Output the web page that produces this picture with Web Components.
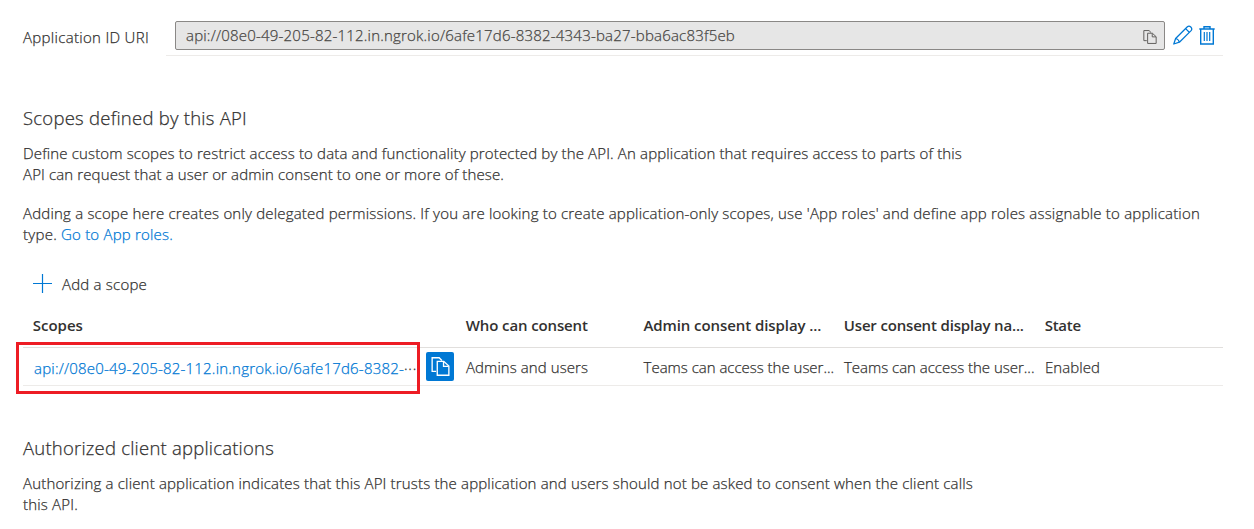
<!DOCTYPE html>
<html lang="en">
<head>
<meta charset="utf-8">
<title>Expose an API</title>
<style>
html,body{margin:0;background:#fff}
body{font:300 15px/21px "Open Sans","Noto Sans",sans-serif;color:#323130;-webkit-text-stroke:.25px;overflow:hidden}
</style>
</head>
<body>
<api-page></api-page>
<script>
const define=(name,html,init)=>{
  const t=document.createElement('template');t.innerHTML=html;
  customElements.define(name,class extends HTMLElement{
    constructor(){super();this.attachShadow({mode:'open'}).append(t.content.cloneNode(true));}
    connectedCallback(){if(init)init.call(this);}
  });
};

/* A single line of text whose tracking is tuned to the given measure. */
define('fit-line',`<style>:host{display:block;white-space:pre;width:max-content}span{display:inline-block}</style><span><slot></slot></span>`,function(){
  const s=this.shadowRoot.querySelector('span'),w=+this.getAttribute('measure');
  const n=[...this.textContent].length;
  s.style.letterSpacing=(w-s.getBoundingClientRect().width)/n+'px';
});

define('copy-icon',`<style>:host{display:block;width:20px;height:20px}svg{display:block;width:100%;height:100%}</style>
<svg viewBox="0 0 20 20" fill="none" stroke="currentColor" stroke-width="1.4"><path d="M5.4 15.2H1.2V.8H8.6L11.5 3.6"/><path d="M6.6 4.6H13.4L18.8 9.6V19.2H6.6Z"/><path d="M13.2 4.8V9.8H18.6"/></svg>`);

define('edit-icon',`<style>:host{display:block;width:20px;height:20px}svg{display:block}</style>
<svg width="20" height="20" viewBox="0 0 20 20" fill="none" stroke="currentColor" stroke-width="1.25" stroke-linejoin="round"><path d="M.8 19 2.6 13.5 14.4 1.8Q16 .3 17.8 2T18.1 5.6L6.4 17.2Z"/><path d="M12.6 3.6 16.3 7.3M2.6 13.5Q5.6 14.2 6.4 17.2"/></svg>`);

define('delete-icon',`<style>:host{display:block;width:16px;height:20px}svg{display:block}</style>
<svg width="16" height="20" viewBox="0 0 16 20" fill="none" stroke="currentColor" stroke-width="1.4"><path d="M.3 4H15.7M5 4V1.7H11V4M1.7 4V19H14.3V4"/><path d="M5.3 7V16M8 7V16M10.7 7V16" stroke-width="1.2"/></svg>`);

define('uri-field',`<style>
:host{display:flex;height:56px}
.label{width:143px;padding-top:27px;box-sizing:border-box}
.control{width:1057px;box-sizing:border-box;border-bottom:1px solid #edebe9;padding:21px 0 0 9px;display:flex}
.box{width:990px;height:29px;box-sizing:border-box;border:1px solid #8a8886;border-radius:2px;background:#e6e6e6;display:flex;justify-content:space-between;padding:3px 7px 0 10px;color:#484644}
copy-icon{width:14px;height:16px;margin-top:4px;color:#605e5c}
edit-icon{margin:4px 0 0 8px;color:#0078d4}
delete-icon{margin:4px 0 0 6px;color:#0078d4}
</style>
<div class="label"><slot name="label"></slot></div>
<div class="control"><div class="box"><slot></slot><copy-icon></copy-icon></div><edit-icon></edit-icon><delete-icon></delete-icon></div>`);

define('section-title',`<style>:host{display:block;font-size:18.5px;line-height:24px}</style><slot></slot>`);
define('app-link',`<style>:host{display:block;color:#0078d4}</style><slot></slot>`);
define('text-row',`<style>:host{display:flex;gap:4px}</style><slot></slot>`);

define('add-button',`<style>:host{display:flex;gap:10px;padding-left:10px}svg{display:block;color:#0078d4}</style>
<svg width="19" height="19" viewBox="0 0 19 19" stroke="currentColor" stroke-width="1.2"><path d="M9.5 0V19M0 9.5H19"/></svg><slot></slot>`);

define('scope-row',`<style>
:host{display:grid;grid-template-columns:433px 177.6px 200.4px 201px 1fr;padding-left:10px;border-bottom:1px solid #edebe9;box-sizing:border-box;align-items:start}
:host([header]){font-weight:600;-webkit-text-stroke:0;height:38px;padding:5px 0 0 9.8px;border-color:#e1dfdd}
:host(:not([header])){height:38px;padding-top:9px}
</style><slot></slot>`);

define('scope-name',`<style>
:host{display:flex;position:relative;padding:1px 0 0 1px}
.more{color:#323130;margin-top:-4px}
.frame{position:absolute;left:-17px;top:-15px;width:404px;height:52px;box-sizing:border-box;border:3px solid #ed1c24}
.copy{position:absolute;left:393px;top:-5px;width:28px;height:29px;border-radius:2px;background:#0078d4;color:#fff;display:flex;justify-content:center;align-items:center}
copy-icon{width:19px;height:21px}
</style><app-link><slot></slot></app-link><span class="more"><slot name="more"></slot></span><div class="frame"></div><div class="copy"><copy-icon></copy-icon></div>`);

define('api-page',`<style>
:host{display:block;width:1200px;padding-left:23px}
.s1{margin-top:50px}.p{margin-top:13px}.p2{margin-top:18px}.add{margin-top:29px}.table{margin-top:15px}.s2{margin-top:50px}
</style>
<uri-field><fit-line slot="label" measure="126">Application ID URI</fit-line><fit-line measure="549">api://08e0-49-205-82-112.in.ngrok.io/6afe17d6-8382-4343-ba27-bba6ac83f5eb</fit-line></uri-field>
<section-title class="s1"><fit-line measure="224">Scopes defined by this API</fit-line></section-title>
<div class="p"><fit-line measure="939">Define custom scopes to restrict access to data and functionality protected by the API. An application that requires access to parts of this</fit-line>
<fit-line measure="481">API can request that a user or admin consent to one or more of these.</fit-line></div>
<div class="p2"><fit-line measure="1177">Adding a scope here creates only delegated permissions. If you are looking to create application-only scopes, use 'App roles' and define app roles assignable to application</fit-line>
<text-row><fit-line measure="34">type.</fit-line><app-link><fit-line measure="112">Go to App roles.</fit-line></app-link></text-row></div>
<add-button class="add"><fit-line measure="85">Add a scope</fit-line></add-button>
<div class="table">
<scope-row header><fit-line measure="50">Scopes</fit-line><fit-line measure="122">Who can consent</fit-line><fit-line measure="178">Admin consent display ...</fit-line><fit-line measure="180">User consent display na...</fit-line><fit-line measure="36">State</fit-line></scope-row>
<scope-row><scope-name><fit-line measure="370">api://08e0-49-205-82-112.in.ngrok.io/6afe17d6-8382-</fit-line><fit-line slot="more" measure="13">...</fit-line></scope-name><fit-line measure="122">Admins and users</fit-line><fit-line measure="190.5">Teams can access the user...</fit-line><fit-line measure="190.5">Teams can access the user...</fit-line><fit-line measure="55">Enabled</fit-line></scope-row>
</div>
<section-title class="s2"><fit-line measure="251">Authorized client applications</fit-line></section-title>
<div class="p"><fit-line measure="950">Authorizing a client application indicates that this API trusts the application and users should not be asked to consent when the client calls</fit-line>
<fit-line measure="55">this API.</fit-line></div>`);
</script>
</body>
</html>
